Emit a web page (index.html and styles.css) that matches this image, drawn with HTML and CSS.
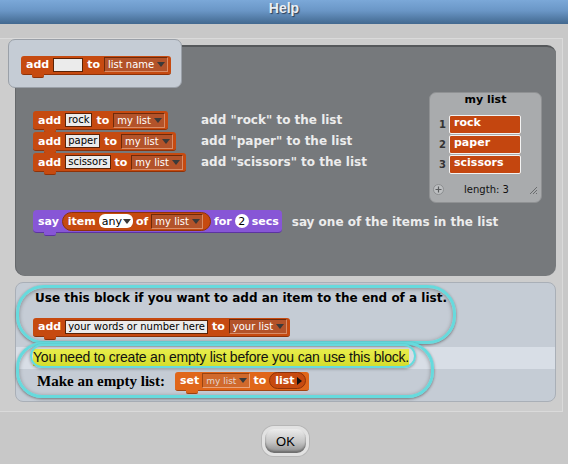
FILE: index.html
```html
<!DOCTYPE html>
<html lang="en">
<head>
  <meta charset="UTF-8">
  <meta name="viewport" content="width=device-width, initial-scale=1.0">
  <title>Help</title>
  <link rel="stylesheet" href="styles.css">
</head>
<body>
  <div class="titlebar">Help</div>

  <div class="frame">
    <!-- palette block that sits over the corner of the stage -->
    <div class="palette-card">
      <div class="block list-block">
        <span class="lbl">add</span>
        <span class="field blank"></span>
        <span class="lbl">to</span>
        <span class="menu">list name <i class="caret"></i></span>
      </div>
    </div>

    <div class="stage">
      <div class="stage-main">
        <div class="example">
          <div class="cell">
            <div class="block list-block">
              <span class="lbl">add</span>
              <span class="field">rock</span>
              <span class="lbl">to</span>
              <span class="menu">my list <i class="caret"></i></span>
            </div>
          </div>
          <span class="desc">add "rock" to the list</span>
        </div>
        <div class="example">
          <div class="cell">
            <div class="block list-block">
              <span class="lbl">add</span>
              <span class="field">paper</span>
              <span class="lbl">to</span>
              <span class="menu">my list <i class="caret"></i></span>
            </div>
          </div>
          <span class="desc">add "paper" to the list</span>
        </div>
        <div class="example">
          <div class="cell">
            <div class="block list-block">
              <span class="lbl">add</span>
              <span class="field">scissors</span>
              <span class="lbl">to</span>
              <span class="menu">my list <i class="caret"></i></span>
            </div>
          </div>
          <span class="desc">add "scissors" to the list</span>
        </div>

        <div class="say-row">
          <div class="block say-block">
            <span class="lbl">say</span>
            <span class="reporter">
              <span class="lbl">item</span>
              <span class="pick">any <i class="caret"></i></span>
              <span class="lbl">of</span>
              <span class="menu">my list <i class="caret"></i></span>
            </span>
            <span class="lbl">for</span>
            <span class="num">2</span>
            <span class="lbl">secs</span>
          </div>
          <span class="desc">say one of the items in the list</span>
        </div>
      </div>

      <div class="watcher">
        <div class="watcher-title">my list</div>
        <div class="wrow"><span class="wnum">1</span><span class="witem">rock</span></div>
        <div class="wrow"><span class="wnum">2</span><span class="witem">paper</span></div>
        <div class="wrow"><span class="wnum">3</span><span class="witem">scissors</span></div>
        <div class="watcher-foot">
          <svg class="plus" width="11" height="11" viewBox="0 0 11 11">
            <circle cx="5.5" cy="5.5" r="5" fill="#bdbfc1" stroke="#8c8e90"/>
            <path d="M5.5 2.5v6M2.5 5.5h6" stroke="#5a5c5e" stroke-width="1.2"/>
          </svg>
          <span class="length">length: 3</span>
          <svg class="grip" width="9" height="9" viewBox="0 0 9 9">
            <path d="M1 8L8 1M4 8L8 4M7 8L8 7" stroke="#6a6c6e" stroke-width="1"/>
          </svg>
        </div>
      </div>
    </div>

    <div class="notes">
      <p class="note">Use this block if you want to add an item to the end of a list.</p>
      <div class="block list-block">
        <span class="lbl">add</span>
        <span class="field">your words or number here</span>
        <span class="lbl">to</span>
        <span class="menu">your list <i class="caret"></i></span>
      </div>
      <div class="band">
        <span class="marker">You need to create an empty list before you can use this block.</span>
      </div>
      <div class="make-row">
        <span class="make-label">Make an empty list:</span>
        <div class="block set-block">
          <span class="lbl">set</span>
          <span class="menu small">my list <i class="caret"></i></span>
          <span class="lbl">to</span>
          <span class="reporter list-rep"><span class="lbl">list</span><i class="arrow"></i></span>
        </div>
      </div>

      <div class="ring ring-one"></div>
      <div class="ring ring-two"></div>
      <div class="ring ring-three"></div>
    </div>
  </div>

  <div class="footer">
    <button class="ok" type="button">OK</button>
  </div>
</body>
</html>
```

FILE: styles.css
```css
* {
  box-sizing: border-box;
}
body {
  margin: 0;
  width: 568px;
  height: 464px;
  overflow: hidden;
  background: #c8c8c8;
  font-family: "DejaVu Sans", sans-serif;
}
.titlebar {
  height: 24px;
  line-height: 24px;
  text-align: center;
  background: linear-gradient(#7ba8d8, #6a96c6 45%, #42688f);
  color: #e9eef4;
  font: bold 14px "Liberation Sans", Arial, sans-serif;
  text-shadow: 1px 1px 1px #2c3e55;
}
.frame {
  position: relative;
  margin: 14px 5px 0 0;
  height: 374px;
  padding: 6px 6px 9px 15px;
  background: #cdcdcd;
  border: 1px solid #dadada;
  border-left: none;
  display: flex;
  flex-direction: column;
  gap: 6px;
}

/* blocks */
.block {
  position: relative;
  display: inline-flex;
  align-items: center;
  gap: 4px;
  height: 19px;
  padding: 0 3px 0 5px;
  border-radius: 3px;
  background: #c64a10;
  border-bottom: 1px solid #8e3208;
  color: #fff;
  font: bold 11px "DejaVu Sans", sans-serif;
  white-space: nowrap;
}
.block::after {
  content: "";
  position: absolute;
  left: 11px;
  bottom: -4px;
  width: 12px;
  height: 4px;
  background: inherit;
  border-bottom: 1px solid #8e3208;
  border-radius: 0 0 2px 2px;
}
.field {
  height: 14px;
  line-height: 12px;
  padding: 0 2px;
  background: #ebebeb;
  border: 1px solid #5a2206;
  color: #000;
  font: 10px "DejaVu Sans", sans-serif;
}
.blank {
  width: 30px;
}
.menu {
  display: inline-flex;
  align-items: center;
  gap: 3px;
  height: 15px;
  padding: 0 2px 0 3px;
  background: #b3532a;
  border: 1px solid;
  border-color: #6e2a0a #d98c66 #d98c66 #6e2a0a;
  color: #fff;
  font: 10px "DejaVu Sans", sans-serif;
}
.caret {
  width: 0;
  height: 0;
  border-left: 4px solid transparent;
  border-right: 4px solid transparent;
  border-top: 5px solid #3a3a3a;
}

.palette-card {
  position: absolute;
  left: 8px;
  top: 0;
  width: 174px;
  height: 49px;
  padding: 13px 0 0 12px;
  background: #c5ccd5;
  border: 1px solid #9aa0a8;
  border-radius: 7px;
  z-index: 2;
}

/* dark stage */
.stage {
  display: flex;
  height: 231px;
  padding: 0 14px 0 18px;
  background: #76797c;
  border-top: 2px solid #55585b;
  box-shadow: inset 1px 0 0 #65686b;
  border-radius: 2px 9px 10px 10px;
}
.stage-main {
  flex: 1;
  min-width: 0;
  padding-top: 62px;
}
.example {
  display: flex;
  align-items: center;
  height: 21px;
}
.cell {
  width: 168px;
  flex-shrink: 0;
}
.desc {
  color: #ececec;
  font: bold 12px "DejaVu Sans", sans-serif;
  white-space: nowrap;
}
.say-row {
  display: flex;
  align-items: center;
  gap: 10px;
  margin-top: 38px;
}
.say-block {
  height: 23px;
  gap: 3px;
  background: #8756d6;
  border-bottom-color: #5c34a0;
  border-radius: 4px;
}
.say-block::after {
  border-bottom-color: #5c34a0;
}
.reporter {
  display: inline-flex;
  align-items: center;
  gap: 3px;
  height: 19px;
  padding: 0 7px 0 5px;
  background: #c64a10;
  border: 1px solid #8e3208;
  border-radius: 10px;
}
.pick {
  display: inline-flex;
  align-items: center;
  gap: 1px;
  height: 14px;
  padding: 0 2px 0 3px;
  background: #fff;
  color: #000;
  border-radius: 6px;
  font: 11px "DejaVu Sans", sans-serif;
}
.num {
  display: inline-flex;
  align-items: center;
  justify-content: center;
  width: 14px;
  height: 14px;
  background: #fff;
  color: #000;
  border-radius: 7px;
  font: 11px "DejaVu Sans", sans-serif;
}

/* list watcher */
.watcher {
  position: relative;
  flex-shrink: 0;
  width: 113px;
  height: 111px;
  margin-top: 45px;
  background: #a9abad;
  border: 1px solid #8f9193;
  border-radius: 7px;
}
.watcher-title {
  height: 21px;
  line-height: 19px;
  text-align: center;
  font: bold 11px "DejaVu Sans", sans-serif;
  color: #000;
}
.wrow {
  display: flex;
  align-items: center;
  height: 20px;
  padding-left: 6px;
}
.wnum {
  width: 13px;
  text-align: center;
  color: #333;
  font: bold 10px "DejaVu Sans", sans-serif;
}
.witem {
  width: 72px;
  height: 19px;
  line-height: 17px;
  padding-left: 4px;
  background: #c4460f;
  border: 1px solid #f2f2f2;
  border-radius: 2px;
  color: #fff;
  font: bold 11px "DejaVu Sans", sans-serif;
}
.watcher-foot {
  display: flex;
  align-items: center;
  margin-top: 10px;
  padding: 0 3px 0 3px;
}
.length {
  flex: 1;
  text-align: center;
  font: 10px "DejaVu Sans", sans-serif;
  color: #111;
}
.grip {
  align-self: flex-end;
}

/* notes panel */
.notes {
  position: relative;
  height: 120px;
  padding: 8px 0 0 17px;
  background: #c5ccd5;
  border: 1px solid #a9afb7;
  border-radius: 8px;
}
.note {
  margin: 0 0 10px 2px;
  line-height: 15px;
  color: #000;
  font: bold 12px "DejaVu Sans", sans-serif;
  white-space: nowrap;
}
.band {
  display: flex;
  align-items: center;
  height: 22px;
  margin: 10px 0 0 -17px;
  padding-left: 17px;
  background: #d8dee6;
}
.marker {
  height: 17px;
  line-height: 17px;
  background: linear-gradient(#e9ee4c, #d5dd2c);
  color: #111;
  font: 14px "Liberation Sans", Arial, sans-serif;
  letter-spacing: -0.2px;
  white-space: nowrap;
}
.make-row {
  display: flex;
  align-items: center;
  gap: 10px;
  margin-top: 3px;
}
.make-label {
  margin-left: 4px;
  color: #000;
  font: bold 15px "Liberation Serif", "Times New Roman", serif;
}
.set-block {
  gap: 3px;
  background: #e0661a;
  border-bottom-color: #a44510;
}
.set-block::after {
  border-bottom-color: #a44510;
}
.menu.small {
  background: #d0692c;
  color: #e2d6ce;
  font-size: 9px;
  border-color: #9a4412 #eaa27a #eaa27a #9a4412;
}
.list-rep {
  height: 17px;
  padding: 0 3px 0 5px;
  gap: 2px;
}
.arrow {
  width: 0;
  height: 0;
  border-top: 4px solid transparent;
  border-bottom: 4px solid transparent;
  border-left: 5px solid #111;
}

/* cyan call-out rings drawn over the notes */
.ring {
  position: absolute;
  border: 3px solid #66dadd;
  box-shadow: 0 1px 3px rgba(0, 0, 0, 0.45), inset 0 1px 4px rgba(0, 0, 0, 0.35);
  pointer-events: none;
}
.ring-one {
  left: 0;
  top: 2px;
  width: 440px;
  height: 59px;
  border-radius: 28px;
}
.ring-two {
  left: 0;
  top: 59px;
  width: 418px;
  height: 56px;
  border-radius: 26px;
}
.ring-three {
  left: 14px;
  top: 61px;
  width: 386px;
  height: 24px;
  border-width: 2px;
  border-radius: 12px;
  box-shadow: 0 1px 3px rgba(0, 0, 0, 0.35);
}

/* footer */
.footer {
  padding: 14px 0 0 3px;
  text-align: center;
}
.ok {
  width: 47px;
  height: 30px;
  border: 3px solid #e2e2e2;
  border-radius: 12px;
  background: linear-gradient(#ececec, #c4c4c4 55%, #8a8a8a);
  box-shadow: 0 0 0 1px #b6b6b6, inset 0 -2px 2px #6e6e6e;
  color: #000;
  font: 13px "Liberation Sans", Arial, sans-serif;
  cursor: pointer;
}
```
